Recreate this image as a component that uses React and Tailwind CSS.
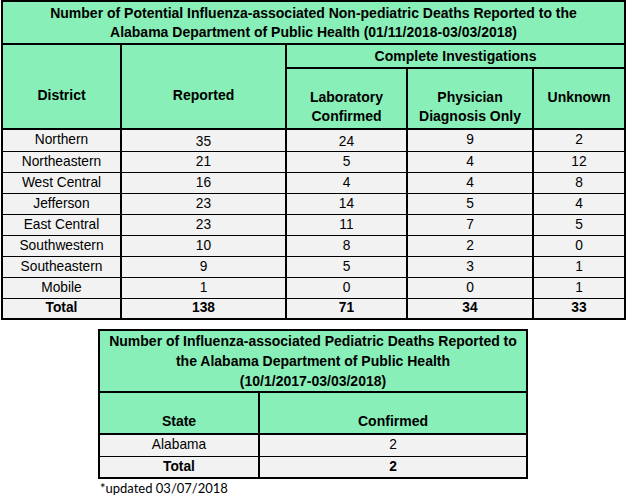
const rows = [
  ["Northern", 35, 24, 9, 2],
  ["Northeastern", 21, 5, 4, 12],
  ["West Central", 16, 4, 4, 8],
  ["Jefferson", 23, 14, 5, 4],
  ["East Central", 23, 11, 7, 5],
  ["Southwestern", 10, 8, 2, 0],
  ["Southeastern", 9, 5, 3, 1],
  ["Mobile", 1, 0, 0, 1],
];

const hd = "bg-[#87efb7] border-2 border-black font-bold text-center";
const td = "border-x-2 border-y border-black text-center p-0";

export default function App() {
  return (
    <div className="bg-white w-[632px] h-[501px] pl-px text-black font-['Liberation_Sans',Arial,sans-serif]">
      <table className="table-fixed border-collapse w-[623px] text-[13.75px] leading-4">
        <colgroup>
          <col className="w-[119px]" />
          <col className="w-[165px]" />
          <col className="w-[121px]" />
          <col className="w-[126px]" />
          <col className="w-[92px]" />
        </colgroup>
        <thead className="text-[14px]">
          <tr className="h-[43px]">
            <th colSpan={5} className={`${hd} leading-[19px]`}>
              Number of Potential Influenza-associated Non-pediatric Deaths Reported to the
              <br />
              Alabama Department of Public Health (01/11/2018-03/03/2018)
            </th>
          </tr>
          <tr className="h-[24px]">
            <th rowSpan={2} className={`${hd} align-top pt-[42px]`}>District</th>
            <th rowSpan={2} className={`${hd} align-top pt-[42px]`}>Reported</th>
            <th colSpan={3} className={hd}>Complete Investigations</th>
          </tr>
          <tr className="h-[61px]">
            <th className={`${hd} align-top leading-[19px] pt-[19px]`}>Laboratory<br />Confirmed</th>
            <th className={`${hd} align-top leading-[19px] pt-[19px]`}>Physician<br />Diagnosis Only</th>
            <th className={`${hd} align-top leading-[19px] pt-[19px]`}>Unknown</th>
          </tr>
        </thead>
        <tbody className="bg-[#f2f2f2]">
          {rows.map((r, i) => (
            <tr key={r[0]} className={i === 0 ? "h-[22px]" : "h-[21px]"}>
              {r.map((v, j) => (
                <td
                  key={j}
                  className={`${td} ${i === 0 && (j === 1 || j === 2) ? "pt-1" : ""}`}
                >
                  {v}
                </td>
              ))}
            </tr>
          ))}
          <tr className="h-[21px] font-bold">
            <td className={`${td} border-b-2`}>Total</td>
            <td className={`${td} border-b-2`}>138</td>
            <td className={`${td} border-b-2`}>71</td>
            <td className={`${td} border-b-2`}>34</td>
            <td className={`${td} border-b-2`}>33</td>
          </tr>
        </tbody>
      </table>

      <div className="ml-[97px] mt-[9px] w-[428px]">
        <table className="table-fixed border-collapse w-[428px] text-[13.75px] leading-4">
          <colgroup>
            <col className="w-[160px]" />
            <col className="w-[268px]" />
          </colgroup>
          <thead className="text-[14px]">
            <tr className="h-[61px]">
              <th colSpan={2} className={`${hd} leading-[20px]`}>
                Number of Influenza-associated Pediatric Deaths Reported to
                <br />
                the Alabama Department of Public Health
                <br />
                (10/1/2017-03/03/2018)
              </th>
            </tr>
            <tr className="h-[42px]">
              <th className={`${hd} align-bottom pb-1`}>State</th>
              <th className={`${hd} align-bottom pb-1`}>Confirmed</th>
            </tr>
          </thead>
          <tbody className="bg-[#f2f2f2]">
            <tr className="h-[22px]">
              <td className={td}>Alabama</td>
              <td className={td}>2</td>
            </tr>
            <tr className="h-[22px] font-bold">
              <td className={`${td} border-b-2`}>Total</td>
              <td className={`${td} border-b-2`}>2</td>
            </tr>
          </tbody>
        </table>
        <p className="mt-px ml-[2px] text-[13px] leading-4 font-['Lato',sans-serif]">*updated 03/07/2018</p>
      </div>
    </div>
  );
}
